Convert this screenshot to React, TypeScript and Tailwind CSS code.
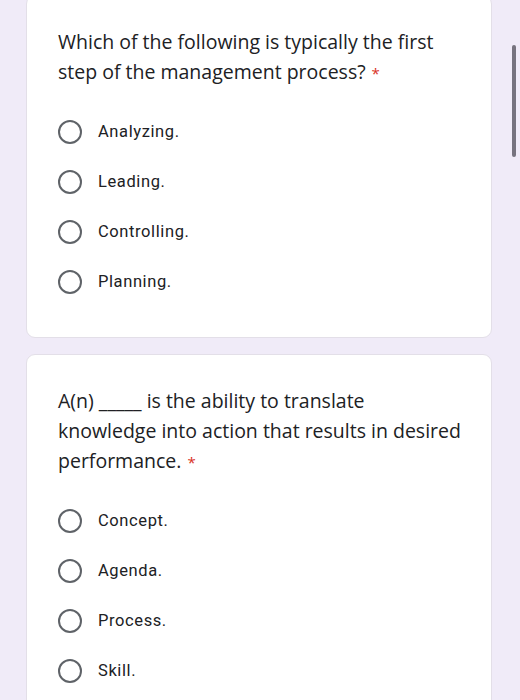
const questions = [
  {
    lines: ["Which of the following is typically the first", "step of the management process?"],
    options: ["Analyzing.", "Leading.", "Controlling.", "Planning."],
  },
  {
    lines: ["A(n) _____ is the ability to translate", "knowledge into action that results in desired", "performance."],
    options: ["Concept.", "Agenda.", "Process.", "Skill."],
  },
];

function Radio() {
  return <div className="w-[24px] h-[24px] rounded-full border-2 border-[#5f6368] shrink-0"></div>;
}

export default function App() {
  return (
    <div className="relative w-[520px] h-[700px] overflow-hidden bg-[#f0ebf8]">
      <div className="flex flex-col gap-[16px] pl-[26px] pr-[28px] mt-[-5px]">
        {questions.map((q, i) => (
          <div key={i} className="bg-white border border-[#e3dfe8] rounded-[9px] pt-[31px] pb-[30px] pl-[31px] pr-[12px]">
            <div className="text-[19.5px] leading-[30px] text-[#202124] font-['Open_Sans',sans-serif] whitespace-nowrap">
              {q.lines.map((l, j) => (
                <div key={j}>
                  {l}
                  {j === q.lines.length - 1 && <span className="text-[#d93025] ml-[6px] text-[15px]">*</span>}
                </div>
              ))}
            </div>
            <div className="mt-[19px] flex flex-col">
              {q.options.map((o) => (
                <div key={o} className="h-[50px] flex items-center gap-[16px]">
                  <Radio />
                  <span className="text-[16.5px] tracking-[0.6px] text-[#202124] font-['Roboto',sans-serif]">{o}</span>
                </div>
              ))}
            </div>
          </div>
        ))}
      </div>
      {/* scrollbar */}
      <div className="absolute left-[512px] top-[45px] w-[4px] h-[112px] rounded-full bg-[#77737f]"></div>
    </div>
  );
}
